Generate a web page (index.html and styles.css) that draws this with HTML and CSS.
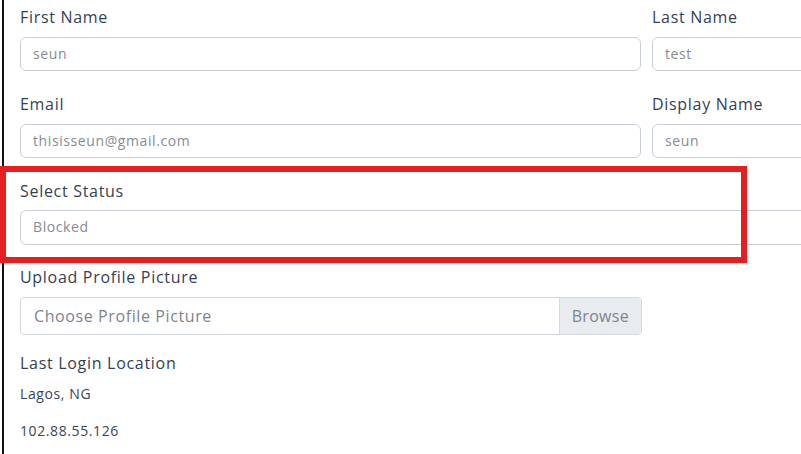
FILE: index.html
```html
<!DOCTYPE html>
<html>
<head>
<meta charset="utf-8">
<link rel="stylesheet" href="styles.css">
</head>
<body>
<div class="page">
  <form class="form">
    <div class="row two">
      <div class="field">
        <label class="label">First Name</label>
        <div class="input">seun</div>
      </div>
      <div class="field">
        <label class="label">Last Name</label>
        <div class="input">test</div>
      </div>
    </div>
    <div class="row two">
      <div class="field">
        <label class="label">Email</label>
        <div class="input">thisisseun@gmail.com</div>
      </div>
      <div class="field">
        <label class="label">Display Name</label>
        <div class="input">seun</div>
      </div>
    </div>
    <div class="row row-select">
      <div class="field">
        <label class="label">Select Status</label>
        <div class="input wide">Blocked</div>
      </div>
    </div>
    <div class="row row-file">
      <div class="field">
        <label class="label">Upload Profile Picture</label>
        <div class="file">
          <span class="file-text">Choose Profile Picture</span>
          <span class="file-btn">Browse</span>
        </div>
      </div>
    </div>
    <div class="row row-info">
      <div class="field">
        <label class="label">Last Login Location</label>
        <p class="info">Lagos, NG</p>
        <p class="info">102.88.55.126</p>
      </div>
    </div>
  </form>
  <div class="highlight"></div>
</div>
</body>
</html>
```

FILE: styles.css
```css
html, body {
  margin: 0;
  padding: 0;
  background: #fff;
  overflow: hidden;
  width: 801px;
  height: 454px;
}
.page {
  position: relative;
  margin-left: 2px;
  border-left: 2px solid #111;
  padding-left: 16px;
  height: 454px;
  font-family: "Open Sans", "Noto Sans", sans-serif;
  color: #343f55;
  letter-spacing: 0.6px;
}
.form {
  width: 900px;
  padding-top: 5px;
}
.row {
  margin-bottom: 21px;
}
.row.row-select {
  margin-bottom: 20px;
}
.row.row-select .label {
  margin-bottom: 7px;
}
.row.row-file {
  margin-bottom: 16px;
}
.row.two {
  display: grid;
  grid-template-columns: 621px 200px;
  column-gap: 11px;
}
.label {
  display: block;
  font-size: 16px;
  font-weight: 500;
  line-height: 24px;
  margin-bottom: 8px;
  letter-spacing: 0.7px;
}
.input {
  box-sizing: border-box;
  height: 34px;
  border: 1px solid #c9ced6;
  border-radius: 6px;
  padding: 0 12px;
  font-size: 14px;
  line-height: 32px;
  color: #858b96;
}
.input.wide {
  width: 900px;
  height: 35px;
}
.file {
  box-sizing: border-box;
  width: 622px;
  height: 38px;
  display: flex;
  border: 1px solid #d5d9df;
  border-radius: 4px;
  overflow: hidden;
  font-size: 16px;
  color: #7d838f;
}
.file-text {
  flex: 1;
  padding: 0 13px;
  line-height: 36px;
}
.file-btn {
  background: #e9ecef;
  border-left: 1px solid #d5d9df;
  padding: 0 12px;
  line-height: 36px;
  letter-spacing: 0.3px;
}
.row-info .label {
  margin-bottom: 7px;
}
.info {
  margin: 0 0 13px;
  font-size: 14px;
  line-height: 24px;
  color: #3c4454;
}
.highlight {
  position: absolute;
  left: -4px;
  top: 166px;
  width: 747px;
  height: 97px;
  box-sizing: border-box;
  border: 6px solid #e61e21;
}
```
